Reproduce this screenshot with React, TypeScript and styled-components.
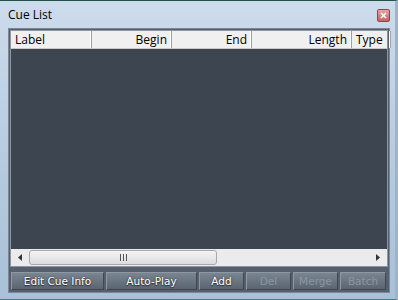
import styled, { createGlobalStyle } from "styled-components"

const Global = createGlobalStyle`
    html, body { margin: 0; padding: 0; background: #b7cde2; }
    * { box-sizing: border-box; }
`

const Window = styled.div`
    width: 398px;
    height: 300px;
    display: flex;
    flex-direction: column;
    border-top: 1px solid #24504a;
    border-bottom: 1px solid #2a8a80;
    border-right: 3px solid #9db4ca;
    background: linear-gradient(#cddcec, #b3c9de 60%, #a9c1d8);
    font-family: "Open Sans", "DejaVu Sans", sans-serif;
`

const TitleBar = styled.div`
    height: 27px;
    display: flex;
    align-items: center;
    justify-content: space-between;
    padding: 0 5px 0 8px;
    font-size: 12px;
    color: #000;
`

const Close = styled.div`
    width: 13px;
    height: 13px;
    margin-top: 2px;
    border: 1px solid #8a4848;
    border-radius: 2px;
    background: linear-gradient(#e4a4a4, #c46464);
    display: flex;
    align-items: center;
    justify-content: center;
`

const Panel = styled.div`
    flex: 1;
    margin: 0 5px 6px 8px;
    background: #56606c;
    border: 1px solid #7b8795;
    display: flex;
    flex-direction: column;
    padding: 1px;
`

const List = styled.div`
    flex: 1;
    display: flex;
    flex-direction: column;
    border: 1px solid #8d97a3;
    background: #3d4550;
`

const Header = styled.div`
    display: flex;
    height: 18px;
    background: #f0f0f0;
    border-bottom: 1px solid #c8c8c8;
`

const Col = styled.div<{ $w: number; $right?: boolean }>`
    width: ${p => p.$w}px;
    flex: none;
    padding: 0 4px;
    font-size: 12px;
    line-height: 17px;
    text-align: ${p => (p.$right ? "right" : "left")};
    border-right: 1px solid #a0a0a0;
    box-shadow: inset -1px 0 0 #fff;
    color: #000;
`

const Body = styled.div`
    flex: 1;
`

const HScroll = styled.div`
    height: 17px;
    display: flex;
    align-items: center;
    background: #ebebeb;
    padding: 0 2px;
`

const Arrow = styled.div`
    width: 14px;
    height: 15px;
    display: flex;
    align-items: center;
    justify-content: center;
`

const Thumb = styled.div`
    width: 188px;
    height: 15px;
    margin-left: 2px;
    border: 1px solid #a8a8a8;
    border-radius: 3px;
    background: linear-gradient(#f4f4f4, #dcdcdc);
    display: flex;
    align-items: center;
    justify-content: center;
`

const Track = styled.div`
    flex: 1;
`

const Buttons = styled.div`
    display: flex;
    gap: 2px;
    padding: 5px 1px 1px 1px;
`

const Button = styled.div<{ $w: number; $off?: boolean }>`
    width: ${p => p.$w}px;
    height: 18px;
    border: 1px solid #8e98a4;
    border-bottom-color: #3e4650;
    border-right-color: #3e4650;
    background: linear-gradient(#7a8592, #5b6572);
    font-family: "DejaVu Sans", sans-serif;
    font-size: 10.5px;
    line-height: 16px;
    text-align: center;
    color: ${p => (p.$off ? "#8c96a2" : "#ffffff")};
    text-shadow: ${p => (p.$off ? "none" : "0 0 2px #2a3038, 0 1px 1px #2a3038")};
`

const cols = [
    { label: "Label", w: 81 },
    { label: "Begin", w: 80, right: true },
    { label: "End", w: 80, right: true },
    { label: "Length", w: 100, right: true },
    { label: "Type", w: 39 },
]

const buttons = [
    { label: "Edit Cue Info", w: 93 },
    { label: "Auto-Play", w: 91 },
    { label: "Add", w: 45 },
    { label: "Del", w: 45, off: true },
    { label: "Merge", w: 45, off: true },
    { label: "Batch", w: 46, off: true },
]

export default function App() {
    return <Window>
        <Global />
        <TitleBar>
            <span>Cue List</span>
            <Close>
                <svg width="7" height="7" viewBox="0 0 7 7">
                    <path d="M1 1L6 6M6 1L1 6" stroke="#fff" strokeWidth="1.6" />
                </svg>
            </Close>
        </TitleBar>
        <Panel>
            <List>
                <Header>
                    {cols.map(c => <Col key={c.label} $w={c.w} $right={c.right}>{c.label}</Col>)}
                </Header>
                <Body />
                <HScroll>
                    <Arrow>
                        <svg width="4" height="7" viewBox="0 0 4 7"><path d="M4 0L0 3.5L4 7Z" fill="#333" /></svg>
                    </Arrow>
                    <Thumb>
                        <svg width="9" height="7" viewBox="0 0 9 7">
                            <path d="M1.5 0V7M4.5 0V7M7.5 0V7" stroke="#555" strokeWidth="1" />
                        </svg>
                    </Thumb>
                    <Track />
                    <Arrow>
                        <svg width="4" height="7" viewBox="0 0 4 7"><path d="M0 0L4 3.5L0 7Z" fill="#333" /></svg>
                    </Arrow>
                </HScroll>
            </List>
            <Buttons>
                {buttons.map(b => <Button key={b.label} $w={b.w} $off={b.off}>{b.label}</Button>)}
            </Buttons>
        </Panel>
    </Window>
}
